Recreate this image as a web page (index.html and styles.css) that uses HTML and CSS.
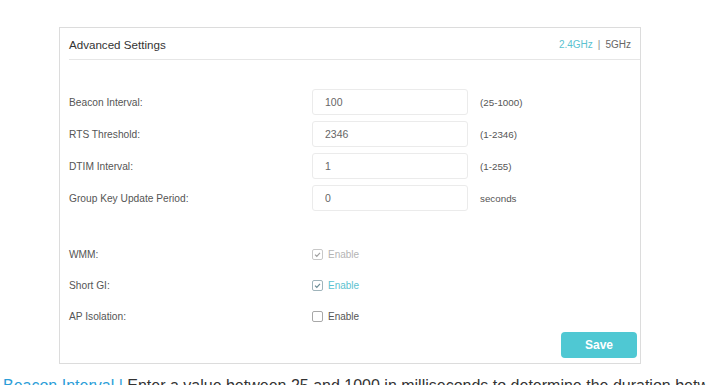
FILE: index.html
```html
<!DOCTYPE html>
<html lang="en">
<head>
    <meta charset="UTF-8">
    <meta name="viewport" content="width=device-width, initial-scale=1.0">
    <title>Advanced Settings</title>
    <link rel="stylesheet" href="styles.css">
</head>
<body>
    <div class="panel">
        <div class="panel-head">
            <span class="title">Advanced Settings</span>
            <span class="bands"><span class="band active">2.4GHz</span><span class="sep">|</span><span class="band">5GHz</span></span>
        </div>

        <div class="fields">
            <div class="row">
                <label>Beacon Interval:</label>
                <input type="text" value="100">
                <span class="hint">(25-1000)</span>
            </div>
            <div class="row">
                <label>RTS Threshold:</label>
                <input type="text" value="2346">
                <span class="hint">(1-2346)</span>
            </div>
            <div class="row">
                <label>DTIM Interval:</label>
                <input type="text" value="1">
                <span class="hint">(1-255)</span>
            </div>
            <div class="row">
                <label>Group Key Update Period:</label>
                <input type="text" value="0">
                <span class="hint">seconds</span>
            </div>
        </div>

        <div class="checks">
            <div class="check-row">
                <label>WMM:</label>
                <span class="check disabled">
                    <svg width="11" height="11" viewBox="0 0 11 11"><rect x="0.5" y="0.5" width="10" height="10" rx="1.5" fill="#fff" stroke="#c8c8c8"/><path d="M3 5.6 L4.8 7.3 L8 3.8" fill="none" stroke="#a0a0a0" stroke-width="1.2"/></svg>
                    Enable
                </span>
            </div>
            <div class="check-row">
                <label>Short GI:</label>
                <span class="check on">
                    <svg width="11" height="11" viewBox="0 0 11 11"><rect x="0.5" y="0.5" width="10" height="10" rx="1.5" fill="#fff" stroke="#9fb4bb"/><path d="M3 5.6 L4.8 7.3 L8 3.8" fill="none" stroke="#6b8c96" stroke-width="1.2"/></svg>
                    Enable
                </span>
            </div>
            <div class="check-row">
                <label>AP Isolation:</label>
                <span class="check">
                    <svg width="11" height="11" viewBox="0 0 11 11"><rect x="0.5" y="0.5" width="10" height="10" rx="1.5" fill="#fff" stroke="#a8a8a8"/></svg>
                    Enable
                </span>
            </div>
        </div>

        <div class="actions">
            <button class="save">Save</button>
        </div>
    </div>

    <p class="help"><span class="term">Beacon Interval</span> <span class="sep">|</span> Enter a value between 25 and 1000 in milliseconds to determine the duration between beacon packets.</p>
</body>
</html>
```

FILE: styles.css
```css
body {
    margin: 0;
    font-family: "Liberation Sans", Arial, sans-serif;
    background-color: #ffffff;
    color: #555555;
    overflow: hidden;
}
.panel {
    box-sizing: border-box;
    width: 582px;
    height: 337px;
    margin: 27px 0 0 59px;
    border: 1px solid #dcdcdc;
    display: flex;
    flex-direction: column;
}
.panel-head {
    margin-left: 9px;
    height: 31px;
    display: flex;
    align-items: center;
    justify-content: space-between;
    padding-right: 9px;
    border-bottom: 1px solid #e6e6e6;
}
.title {
    font-size: 11.6px;
    color: #333333;
    padding-top: 2px;
}
.bands {
    font-size: 10px;
    color: #666666;
    padding-top: 2px;
}
.band.active {
    color: #5bc2d0;
}
.bands .sep {
    margin: 0 5px;
    color: #888888;
}
.fields {
    margin-top: 26px;
}
.row {
    height: 32px;
    display: flex;
    align-items: center;
    padding-left: 9px;
    font-size: 10.2px;
}
.row label,
.check-row label {
    width: 243px;
    color: #555555;
}
.row input {
    box-sizing: border-box;
    width: 156px;
    height: 26px;
    border: 1px solid #ebebeb;
    border-radius: 3px;
    padding: 0 12px;
    font-family: "Liberation Sans", Arial, sans-serif;
    font-size: 10.5px;
    color: #666666;
    outline: none;
}
.hint {
    margin-left: 12px;
    color: #555555;
    font-size: 9.8px;
}
.checks {
    margin-top: 25px;
}
.check-row {
    height: 31px;
    display: flex;
    align-items: center;
    padding-left: 9px;
    font-size: 10.2px;
}
.check {
    display: flex;
    align-items: center;
    gap: 5px;
    color: #555555;
    font-size: 10px;
}
.check.disabled {
    color: #b4b4b4;
}
.check.on {
    color: #5bc2d0;
}
.actions {
    display: flex;
    justify-content: flex-end;
    padding-right: 3px;
    margin-top: 0;
}
.save {
    width: 76px;
    height: 26px;
    border: none;
    border-radius: 4px;
    background-color: #4fc8d3;
    color: #ffffff;
    font-family: "Liberation Sans", Arial, sans-serif;
    font-size: 12px;
    font-weight: bold;
    cursor: pointer;
}
.help {
    margin: 12px 0 0 3px;
    font-size: 16px;
    line-height: 20px;
    white-space: nowrap;
    color: #333333;
}
.help .term {
    color: #2b9ed8;
}
.help .sep {
    color: #2b9ed8;
}
```
